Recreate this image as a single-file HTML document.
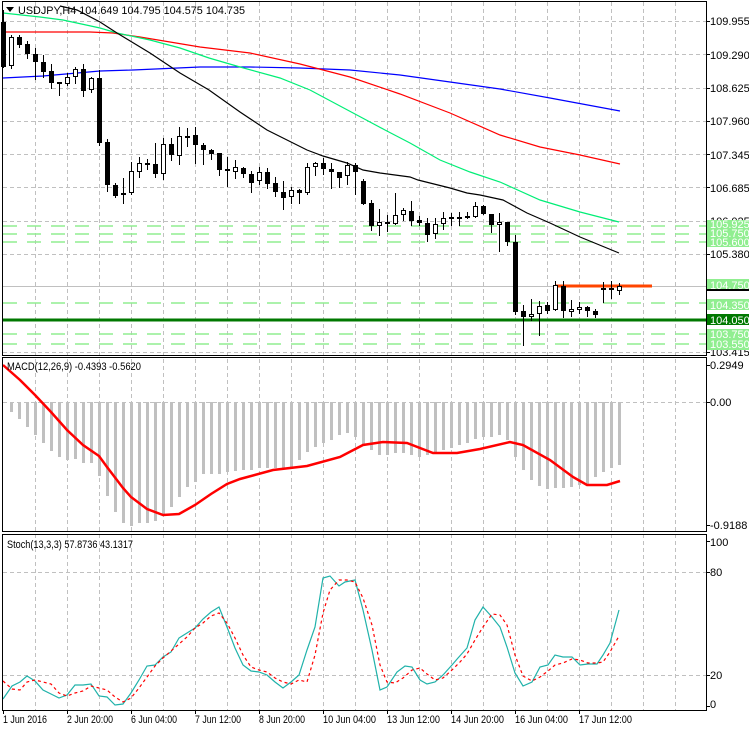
<!DOCTYPE html>
<html><head><meta charset="utf-8"><style>
html,body{margin:0;padding:0;background:#fff;}
svg{display:block;font-family:"Liberation Sans",sans-serif;font-size:11px;}
</style></head><body>
<svg width="749" height="731" viewBox="0 0 749 731" xmlns="http://www.w3.org/2000/svg">
<rect width="749" height="731" fill="#fff"/>
<!-- grid -->
<g stroke="#c0c0c0" stroke-width="1" stroke-dasharray="4,3" fill="none">
<path d="M35.5 2V710M67.5 2V710M99.5 2V710M131.5 2V710M163.5 2V710M195.5 2V710M227.5 2V710M259.5 2V710M291.5 2V710M323.5 2V710M355.5 2V710M387.5 2V710M419.5 2V710M451.5 2V710M483.5 2V710M515.5 2V710M547.5 2V710M579.5 2V710M611.5 2V710M643.5 2V710M675.5 2V710"/>
<path d="M3 21.5H706M3 54.5H706M3 88.5H706M3 121.5H706M3 154.5H706M3 187.5H706M3 221.5H706M3 254.5H706M3 352.5H706M3 402.5H706M3 572.5H706M3 675.5H706"/>
</g>
<rect x="0" y="356" width="706" height="2" fill="#fff"/>
<rect x="0" y="532" width="706" height="3" fill="#fff"/>
<!-- level lines -->
<g stroke="#90ee90" stroke-width="1.5" stroke-dasharray="14,10">
<path d="M3 226H706M3 234H706M3 242H706M3 303H706M3 334H706M3 344H706"/>
</g>
<path d="M3 286.5H706" stroke="#c0c0c0" stroke-width="1"/>
<path d="M555 286H652" stroke="#ff4500" stroke-width="3"/>
<path d="M3 320H706" stroke="#007800" stroke-width="3"/>
<!-- MAs -->
<g fill="none" stroke-width="1.2">
<polyline stroke="#0000ff" points="3,78 43,76 100,71 133,70 200,67 250,67 300,68 350,70 400,75 450,82 500,89 550,98 620,111"/>
<polyline stroke="#ff0000" points="3,32 90,32 113,33 140,37 200,47 250,53 300,64 350,77 400,94 450,113 500,135 540,147 580,155 620,164"/>
<polyline stroke="#00ee76" points="3,13 40,17 63,20 100,28 117,33 150,40 180,48 209,58 240,67 280,78 310,90 340,106 385,130 410,143 440,160 470,172 500,182 540,200 580,212 619,222"/>
<polyline stroke="#000" points="60,6 77,10 100,22 117,33 150,53 180,73 209,90 240,112 267,130 307,150 323,156 347,163 363,170 380,173 410,177 418,180 450,188 467,193 480,195 503,200 527,213 550,223 580,237 619,253"/>
</g>
<!-- candles -->
<g stroke="#000" stroke-width="1" shape-rendering="crispEdges">
<path d="M3.5 10V68M11.5 35V69M19.5 35V48M27.5 41V59M35.5 48V80M43.5 55V78M51.5 64V89M59.5 82V96M67.5 73V86M75.5 67V84M83.5 64V97M91.5 77V93M99.5 70V146M107.5 139V192M115.5 183V198M123.5 178V204M131.5 162V195M139.5 157V178M147.5 159V170M155.5 143V178M163.5 138V180M171.5 138V161M179.5 127V165M187.5 128V147M195.5 127V164M203.5 143V165M211.5 149V160M219.5 153V176M227.5 157V187M235.5 160V179M243.5 167V178M251.5 171V193M259.5 167V185M267.5 168V189M275.5 177V197M283.5 181V210M291.5 187V204M299.5 189V204M307.5 163V195M315.5 162V176M323.5 158V175M331.5 163V189M339.5 172V188M347.5 162V185M355.5 163V195M363.5 179V205M371.5 200V231M379.5 209V236M387.5 215V232M395.5 193V225M403.5 208V221M411.5 201V226M419.5 216V226M427.5 218V242M435.5 218V239M443.5 212V230M451.5 213V226M459.5 212V226M467.5 212V219M475.5 202V218M483.5 205V215M491.5 214V233M499.5 213V252M507.5 222V246M515.5 235V315M523.5 305V346M531.5 299V321M539.5 301V336M547.5 302V314M555.5 281V311M563.5 281V318M571.5 300V317M579.5 302V314M587.5 306V317M595.5 309V318M603.5 282V303M611.5 281V299M619.5 283V295"/>
</g>
<g fill="#000" shape-rendering="crispEdges">
<rect x="1" y="22" width="5" height="45"/><rect x="17" y="37" width="5" height="8"/><rect x="25" y="44" width="5" height="10"/><rect x="33" y="54" width="5" height="8"/><rect x="41" y="62" width="5" height="10"/><rect x="49" y="71" width="5" height="12"/><rect x="57" y="82" width="5" height="2"/><rect x="81" y="69" width="5" height="22"/><rect x="97" y="78" width="5" height="65"/><rect x="105" y="142" width="5" height="43"/><rect x="113" y="185" width="5" height="11"/><rect x="121" y="193" width="5" height="2"/><rect x="145" y="163" width="5" height="2"/><rect x="153" y="164" width="5" height="10"/><rect x="169" y="144" width="5" height="11"/><rect x="185" y="136" width="5" height="2"/><rect x="193" y="135" width="5" height="10"/><rect x="201" y="145" width="5" height="5"/><rect x="209" y="150" width="5" height="4"/><rect x="217" y="153" width="5" height="17"/><rect x="225" y="169" width="5" height="2"/><rect x="241" y="168" width="5" height="6"/><rect x="249" y="174" width="5" height="9"/><rect x="265" y="172" width="5" height="12"/><rect x="273" y="183" width="5" height="9"/><rect x="281" y="192" width="5" height="6"/><rect x="297" y="190" width="5" height="3"/><rect x="321" y="163" width="5" height="6"/><rect x="329" y="169" width="5" height="3"/><rect x="337" y="172" width="5" height="6"/><rect x="353" y="165" width="5" height="7"/><rect x="361" y="181" width="5" height="23"/><rect x="369" y="203" width="5" height="23"/><rect x="385" y="222" width="5" height="2"/><rect x="409" y="211" width="5" height="10"/><rect x="417" y="220" width="5" height="3"/><rect x="425" y="223" width="5" height="12"/><rect x="449" y="217" width="5" height="2"/><rect x="457" y="217" width="5" height="2"/><rect x="465" y="216" width="5" height="2"/><rect x="481" y="206" width="5" height="8"/><rect x="489" y="214" width="5" height="11"/><rect x="505" y="222" width="5" height="20"/><rect x="513" y="242" width="5" height="70"/><rect x="521" y="311" width="5" height="6"/><rect x="545" y="305" width="5" height="6"/><rect x="561" y="286" width="5" height="25"/><rect x="585" y="307" width="5" height="4"/><rect x="593" y="311" width="5" height="4"/><rect x="601" y="288" width="5" height="2"/><rect x="609" y="288" width="5" height="2"/>
</g>
<g fill="#fff" stroke="#000" stroke-width="1" shape-rendering="crispEdges">
<rect x="9.5" y="37.5" width="4" height="28"/><rect x="65.5" y="77.5" width="4" height="6"/><rect x="73.5" y="69.5" width="4" height="7"/><rect x="89.5" y="78.5" width="4" height="11"/><rect x="129.5" y="171.5" width="4" height="21"/><rect x="137.5" y="163.5" width="4" height="8"/><rect x="161.5" y="144.5" width="4" height="29"/><rect x="177.5" y="136.5" width="4" height="19"/><rect x="233.5" y="167.5" width="4" height="4"/><rect x="257.5" y="172.5" width="4" height="8"/><rect x="289.5" y="190.5" width="4" height="6"/><rect x="305.5" y="167.5" width="4" height="25"/><rect x="313.5" y="163.5" width="4" height="3"/><rect x="345.5" y="165.5" width="4" height="10"/><rect x="377.5" y="222.5" width="4" height="3"/><rect x="393.5" y="215.5" width="4" height="8"/><rect x="401.5" y="210.5" width="4" height="4"/><rect x="433.5" y="224.5" width="4" height="9"/><rect x="441.5" y="218.5" width="4" height="5"/><rect x="473.5" y="206.5" width="4" height="10"/><rect x="497.5" y="222.5" width="4" height="2"/><rect x="529.5" y="314.5" width="4" height="2"/><rect x="537.5" y="306.5" width="4" height="7"/><rect x="553.5" y="285.5" width="4" height="24"/><rect x="569.5" y="309.5" width="4" height="2"/><rect x="577.5" y="307.5" width="4" height="2"/><rect x="617.5" y="286.5" width="4" height="4"/>
</g>
<!-- MACD histogram -->
<g stroke="#c0c0c0" stroke-width="3" shape-rendering="crispEdges">
<path d="M11.5 402V412M19.5 402V419M27.5 402V427M35.5 402V435M43.5 402V443M51.5 402V451M59.5 402V457M67.5 402V460M75.5 402V459M83.5 402V463M91.5 402V463M99.5 402V476M107.5 402V496M115.5 402V512M123.5 402V523M131.5 402V526M139.5 402V523M147.5 402V523M155.5 402V521M163.5 402V515M171.5 402V507M179.5 402V497M187.5 402V487M195.5 402V482M203.5 402V474M211.5 402V474M219.5 402V474M227.5 402V472M235.5 402V471M243.5 402V470M251.5 402V470M259.5 402V468M267.5 402V468M275.5 402V468M283.5 402V468M291.5 402V467M299.5 402V460M307.5 402V452M315.5 402V447M323.5 402V443M331.5 402V440M339.5 402V435M347.5 402V433M355.5 402V437M363.5 402V445M371.5 402V450M379.5 402V455M387.5 402V455M395.5 402V453M403.5 402V453M411.5 402V455M419.5 402V457M427.5 402V455M435.5 402V453M443.5 402V450M451.5 402V448M459.5 402V445M467.5 402V443M475.5 402V439M483.5 402V437M491.5 402V437M499.5 402V435M507.5 402V440M515.5 402V457M523.5 402V470M531.5 402V480M539.5 402V486M547.5 402V489M555.5 402V488M563.5 402V488M571.5 402V487M579.5 402V485M587.5 402V485M595.5 402V477M603.5 402V472M611.5 402V468M619.5 402V465"/>
</g>
<polyline fill="none" stroke="#ff0000" stroke-width="2.5" points="3,365 20,380 35,395 51,412 67,430 83,445 99,456 107,467 123,488 131,497 147,509 163,515 179,514 195,505 211,494 227,484 240,479 273,470 307,466 340,457 363,445 383,442 407,443 433,453 457,453 480,449 510,442 523,445 550,460 573,477 587,485 607,485 620,481"/>
<!-- Stochastic -->
<polyline fill="none" stroke="#20b2aa" stroke-width="1.2" points="3,699 12,686 20,682 27,676 35,681 43,690 51,694 59,698 67,695 75,685 83,685 91,684 99,696 107,697 115,705 123,704 131,693 139,680 147,666 155,665 163,657 171,652 179,638 187,633 195,628 203,619 211,612 219,607 227,627 235,648 243,665 251,671 259,672 267,675 275,682 283,688 291,682 299,675 307,650 315,627 323,578 330,576 339,586 345,582 355,580 363,610 372,650 380,690 387,687 397,672 405,666 412,667 420,680 427,684 435,682 443,675 452,665 458,658 467,648 475,620 483,607 492,617 500,627 507,647 515,673 523,686 532,682 540,667 548,665 555,655 563,657 572,657 580,665 588,664 597,664 603,655 610,643 619,610"/>
<polyline fill="none" stroke="#ff0000" stroke-width="1.2" stroke-dasharray="3,3" points="3,681 12,689 20,690 27,682 35,680 43,682 51,684 59,693 67,696 75,693 83,691 91,686 99,688 107,690 115,697 123,702 131,698 139,688 147,677 155,666 163,658 171,651 179,644 187,637 195,628 203,623 211,616 219,613 227,623 235,638 243,655 251,667 259,670 267,672 275,678 283,682 291,684 299,680 307,682 315,655 323,613 330,590 339,580 347,580 355,582 363,598 372,625 380,665 387,682 395,683 403,678 412,670 420,668 427,674 435,680 443,678 452,670 460,662 467,654 475,640 483,627 492,614 500,615 507,625 515,655 523,676 532,681 540,677 548,671 555,665 563,663 572,659 580,660 588,663 597,663 603,662 610,652 619,636"/>
<!-- pane borders -->
<g fill="none" stroke="#000" stroke-width="1" shape-rendering="crispEdges">
<rect x="2.5" y="1.5" width="704" height="354"/>
<rect x="2.5" y="357.5" width="704" height="174"/>
<rect x="2.5" y="534.5" width="704" height="176"/>
<path d="M706 21.5h4M706 54.5h4M706 88.5h4M706 121.5h4M706 154.5h4M706 187.5h4M706 254.5h4M706 352.5h4M706 365.5h4M706 402.5h4M706 525.5h4M706 541.5h4M706 572.5h4M706 675.5h4M706 706.5h4"/>
<path d="M3.5 710v4M67.5 710v4M131.5 710v4M195.5 710v4M259.5 710v4M323.5 710v4M387.5 710v4M451.5 710v4M515.5 710v4M579.5 710v4"/>
</g>
<!-- right axis labels -->
<g fill="#000">
<text x="710" y="25">109.955</text>
<text x="710" y="59">109.290</text>
<text x="710" y="92">108.625</text>
<text x="710" y="125">107.960</text>
<text x="710" y="159">107.345</text>
<text x="710" y="192">106.685</text>
<text x="710" y="225">106.025</text>
<text x="710" y="258">105.380</text>
<text x="710" y="356">103.415</text>
<text x="710" y="369">0.2949</text>
<text x="710" y="406">0.00</text>
<text x="710" y="529">-0.9188</text>
<text x="710" y="546">100</text>
<text x="710" y="576">80</text>
<text x="710" y="679">20</text>
<text x="710" y="708">0</text>
</g>
<rect x="707" y="220" width="42" height="27" fill="#90ee90"/>
<rect x="707" y="279" width="42" height="10" fill="#90ee90"/>
<rect x="707" y="289" width="42" height="2" fill="#000"/>
<rect x="707" y="299" width="42" height="11" fill="#90ee90"/>
<rect x="707" y="314" width="42" height="11" fill="#007800"/>
<rect x="707" y="329" width="42" height="21" fill="#90ee90"/>
<g fill="#fff">
<text x="710" y="228">105.925</text>
<text x="710" y="237">105.750</text>
<text x="710" y="246">105.600</text>
<text x="710" y="289">104.750</text>
<text x="710" y="309">104.350</text>
<text x="710" y="324">104.050</text>
<text x="710" y="338">103.750</text>
<text x="710" y="348">103.550</text>
</g>
<!-- titles -->
<path d="M6 7h8l-4 5z" fill="#000"/>
<text x="18" y="14" fill="#000" textLength="227" lengthAdjust="spacingAndGlyphs">USDJPY,H4  104.649 104.795 104.575 104.735</text>
<text x="7" y="370" fill="#000" textLength="134" lengthAdjust="spacingAndGlyphs">MACD(12,26,9) -0.4393 -0.5620</text>
<text x="7" y="548" fill="#000" textLength="126" lengthAdjust="spacingAndGlyphs">Stoch(13,3,3) 57.8736 43.1317</text>
<!-- dates -->
<g fill="#000">
<text x="3" y="723" textLength="44" lengthAdjust="spacingAndGlyphs">1 Jun 2016</text>
<text x="67" y="723" textLength="46" lengthAdjust="spacingAndGlyphs">2 Jun 20:00</text>
<text x="131" y="723" textLength="46" lengthAdjust="spacingAndGlyphs">6 Jun 04:00</text>
<text x="195" y="723" textLength="46" lengthAdjust="spacingAndGlyphs">7 Jun 12:00</text>
<text x="259" y="723" textLength="46" lengthAdjust="spacingAndGlyphs">8 Jun 20:00</text>
<text x="323" y="723" textLength="53" lengthAdjust="spacingAndGlyphs">10 Jun 04:00</text>
<text x="387" y="723" textLength="53" lengthAdjust="spacingAndGlyphs">13 Jun 12:00</text>
<text x="451" y="723" textLength="53" lengthAdjust="spacingAndGlyphs">14 Jun 20:00</text>
<text x="515" y="723" textLength="53" lengthAdjust="spacingAndGlyphs">16 Jun 04:00</text>
<text x="579" y="723" textLength="53" lengthAdjust="spacingAndGlyphs">17 Jun 12:00</text>
</g>
</svg>
</body></html>
